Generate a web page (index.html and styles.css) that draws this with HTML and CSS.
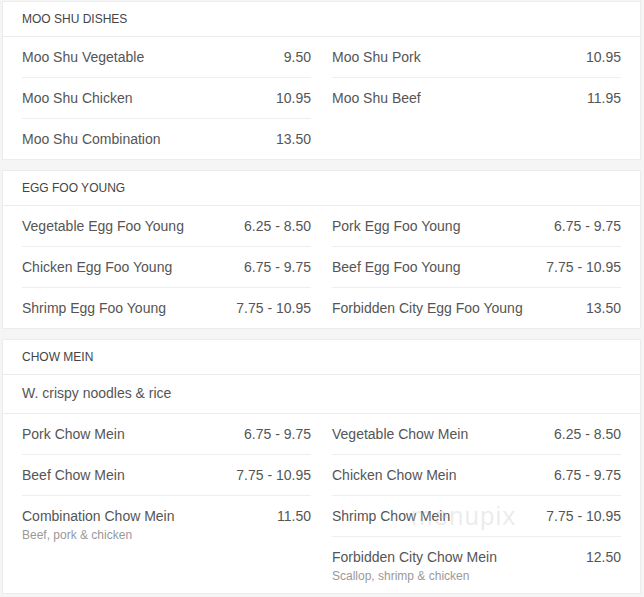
FILE: index.html
```html
<!DOCTYPE html>
<html lang="en">
<head>
<meta charset="utf-8">
<title>Menu</title>
<link rel="stylesheet" href="styles.css">
</head>
<body>
<div class="page">
  <section class="card">
    <h2 class="card-title">MOO SHU DISHES</h2>
    <div class="cols">
      <ul class="col">
        <li class="item"><div class="line"><span>Moo Shu Vegetable</span><span>9.50</span></div></li>
        <li class="item"><div class="line"><span>Moo Shu Chicken</span><span>10.95</span></div></li>
        <li class="item"><div class="line"><span>Moo Shu Combination</span><span>13.50</span></div></li>
      </ul>
      <ul class="col">
        <li class="item"><div class="line"><span>Moo Shu Pork</span><span>10.95</span></div></li>
        <li class="item"><div class="line"><span>Moo Shu Beef</span><span>11.95</span></div></li>
      </ul>
    </div>
  </section>

  <section class="card">
    <h2 class="card-title">EGG FOO YOUNG</h2>
    <div class="cols">
      <ul class="col">
        <li class="item"><div class="line"><span>Vegetable Egg Foo Young</span><span>6.25 - 8.50</span></div></li>
        <li class="item"><div class="line"><span>Chicken Egg Foo Young</span><span>6.75 - 9.75</span></div></li>
        <li class="item"><div class="line"><span>Shrimp Egg Foo Young</span><span>7.75 - 10.95</span></div></li>
      </ul>
      <ul class="col">
        <li class="item"><div class="line"><span>Pork Egg Foo Young</span><span>6.75 - 9.75</span></div></li>
        <li class="item"><div class="line"><span>Beef Egg Foo Young</span><span>7.75 - 10.95</span></div></li>
        <li class="item"><div class="line"><span>Forbidden City Egg Foo Young</span><span>13.50</span></div></li>
      </ul>
    </div>
  </section>

  <section class="card">
    <h2 class="card-title">CHOW MEIN</h2>
    <p class="card-desc">W. crispy noodles &amp; rice</p>
    <div class="cols">
      <ul class="col">
        <li class="item"><div class="line"><span>Pork Chow Mein</span><span>6.75 - 9.75</span></div></li>
        <li class="item"><div class="line"><span>Beef Chow Mein</span><span>7.75 - 10.95</span></div></li>
        <li class="item"><div class="line"><span>Combination Chow Mein</span><span>11.50</span></div><div class="sub">Beef, pork &amp; chicken</div></li>
      </ul>
      <ul class="col">
        <li class="item"><div class="line"><span>Vegetable Chow Mein</span><span>6.25 - 8.50</span></div></li>
        <li class="item"><div class="line"><span>Chicken Chow Mein</span><span>6.75 - 9.75</span></div></li>
        <li class="item"><div class="line"><span>Shrimp Chow Mein</span><span>7.75 - 10.95</span></div></li>
        <li class="item"><div class="line"><span>Forbidden City Chow Mein</span><span>12.50</span></div><div class="sub">Scallop, shrimp &amp; chicken</div></li>
      </ul>
    </div>
    <div class="watermark">menupix</div>
  </section>
</div>
</body>
</html>
```

FILE: styles.css
```css
* { box-sizing: border-box; }
html, body {
  margin: 0;
  padding: 0;
  background: #f5f5f6;
}
body {
  font-family: "Liberation Sans", Arial, sans-serif;
  color: #555;
}
.page {
  padding: 1px 3px 0 2px;
  display: flex;
  flex-direction: column;
  gap: 10px;
}
.card {
  position: relative;
  background: #fff;
  border: 1px solid #ececec;
}
.card-title {
  margin: 0;
  height: 35px;
  line-height: 34px;
  padding: 0 19px;
  font-size: 12px;
  font-weight: normal;
  color: #444;
  border-bottom: 1px solid #ececec;
}
.card-desc {
  margin: 0;
  height: 39px;
  line-height: 37px;
  padding: 0 19px;
  font-size: 14px;
  color: #555;
  border-bottom: 1px solid #ececec;
}
.cols {
  display: grid;
  grid-template-columns: 1fr 1fr;
  column-gap: 21px;
  padding: 0 19px;
  align-items: start;
}
.col {
  list-style: none;
  margin: 0;
  padding: 0;
}
.item {
  padding: 12px 0;
  border-bottom: 1px solid #eeeeee;
}
.item:last-child { border-bottom: none; }
.line {
  display: flex;
  justify-content: space-between;
  font-size: 14px;
  line-height: 16px;
  color: #555;
}
.sub {
  margin-top: 4px;
  font-size: 12px;
  line-height: 15px;
  color: #999;
}
.item:has(.sub) { padding-bottom: 9px; }
.watermark {
  position: absolute;
  left: 408px;
  top: 161px;
  font-size: 26px;
  letter-spacing: 1px;
  color: rgba(190, 190, 190, 0.3);
  pointer-events: none;
}
```
